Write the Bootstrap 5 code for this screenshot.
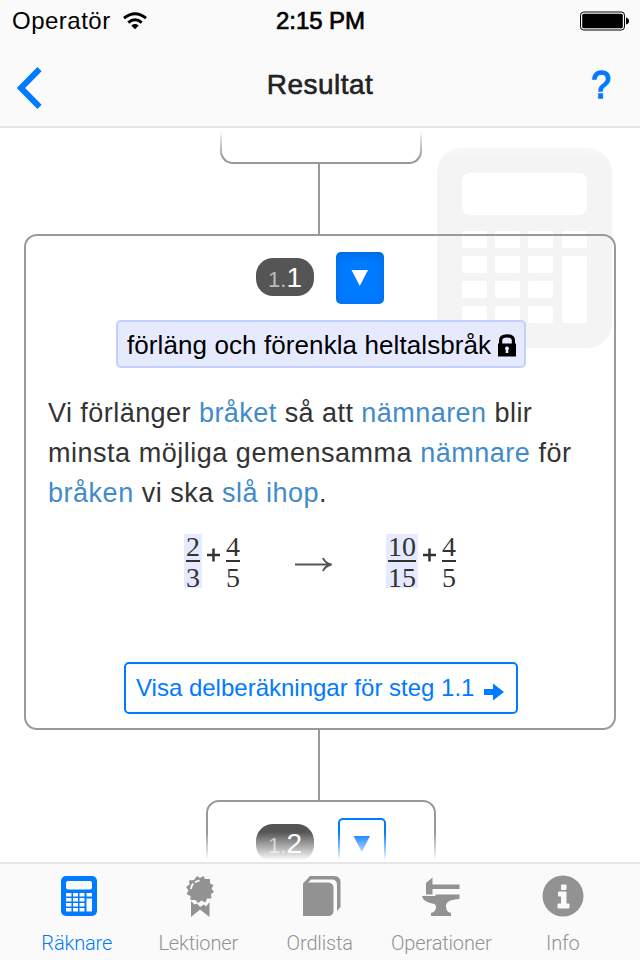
<!DOCTYPE html>
<html lang="sv">
<head>
<meta charset="utf-8">
<meta name="viewport" content="width=device-width, initial-scale=1">
<title>Resultat</title>
<link href="https://cdn.jsdelivr.net/npm/bootstrap@5.3.0/dist/css/bootstrap.min.css" rel="stylesheet">
<style>
  :root { --tint: #007aff; --line: #999; --bar: #fafafa; }
  body { font-family: "Liberation Sans", Arial, sans-serif; width: 640px; height: 960px; color: #333; background: #fff; }
  svg { display: block; }
  .top-bar { height: 128px; background: var(--bar); border-bottom: 2px solid #e5e5e5; }
  .status-row { height: 42px; padding: 0 11px 0 12px; color: #000; font-size: 24px; }
  .status-row > div { flex: 1 1 0; }
  .carrier { letter-spacing: .5px; }
  .wifi { margin-left: 10px; }
  .clock { -webkit-text-stroke: .7px #000; letter-spacing: -.05px; }
  .title-row { height: 84px; padding: 0 29px 0 17px; }
  .title-row > div { flex: 1 1 0; }
  .page-title { font-size: 28px; line-height: 84px; letter-spacing: .45px; color: #222; -webkit-text-stroke: .6px #222; padding: 1px 0 0 12px; }
  .help { font-size: 39px; line-height: 83px; color: var(--tint); -webkit-text-stroke: 1.6px var(--tint); }
  .help span { display: inline-block; transform: scaleX(.9); transform-origin: right; }
  .flow { height: 734px; }
  .watermark { top: 20px; left: 437px; }
  .fade-top, .fade-bottom { left: 0; right: 0; height: 30px; z-index: 3; }
  .fade-top { top: 0; background: linear-gradient(#fff 10%, rgba(255,255,255,0)); }
  .fade-bottom { bottom: 0; background: linear-gradient(rgba(255,255,255,0), #fff 95%); }
  .prev-step { width: 202px; height: 36px; margin-left: 2px; border: 2px solid var(--line); border-top: 0; border-radius: 0 0 13px 13px; }
  .connector { width: 2px; height: 70px; margin-left: -2px; background: var(--line); }
  .step { width: 592px; height: 496px; border: 2px solid var(--line); border-radius: 13px; padding-top: 16px; }
  .next-step { width: 230px; height: 120px; margin-left: 2px; border: 2px solid var(--line); border-radius: 13px; padding-top: 16px; }
  .step-head { gap: 22px; height: 52px; }
  .next-step .step-head { gap: 24px; }
  .step-no { width: 58px; height: 38px; border-radius: 17px; background: #555; color: #fff; font-size: 28px; line-height: 40px; margin-top: -2px; }
  .step-no span { font-size: 22px; color: #bbb; }
  .toggle { width: 48px; height: 52px; border: 2px solid var(--tint); border-radius: 5px; }
  .toggle.pressed { background: var(--tint); box-shadow: inset 0 3px 8px rgba(0,0,0,.14); border: 0; }
  .rule { width: 410px; height: 48px; margin: 16px 0 0 2px; padding: 2px 8px 0 9px; border: 2px solid #c1d0ff; border-radius: 5px; background: #e6eaff; color: #000; font-size: 26px; letter-spacing: .09px; }
  .explain { width: 100%; margin: 25px 0 0; padding-left: 22px; font-size: 27px; line-height: 40px; letter-spacing: .52px; }
  .explain .first { letter-spacing: .45px; }
  .explain a { color: #428bca; text-decoration: none; }
  .math { height: 60px; margin: 21px 0 0 2px; font: 28px/1 "Liberation Serif", serif; width: 274px; }
  .frac { padding: 0 2px; height: 54px; }
  .frac b { font-weight: 400; height: 26px; line-height: 25px; text-align: center; display: block; }
  .frac b + b { border-top: 2px solid #333; height: 28px; line-height: 31px; }
  .frac.hot { background: #e6eaff; }
  .plus { width: 22px; height: 54px; padding-top: 14px; }
  .arrow { margin-top: 23px; }
  .more { width: 394px; height: 52px; margin: 68px 0 0 2px; padding: 0 12px 0 10px; border: 2px solid var(--tint); border-radius: 5px; color: var(--tint); font-size: 24px; }
  .tabs-bar { height: 98px; background: var(--bar); border-top: 2px solid #e5e5e5; padding: 11px 16px 0; }
  .tab-item { width: 121.5px; color: #929292; font: 300 20px/24px Roboto, sans-serif; letter-spacing: -.15px; text-decoration: none; }
  .tab-item svg { height: 42px; }
  .tab-item .ribbon { margin-left: 3px; }
  .tab-item span { margin-top: 14px; }
  .tab-item.on { color: var(--tint); }
</style>
<script src="https://cdn.jsdelivr.net/npm/bootstrap@5.3.0/dist/js/bootstrap.bundle.min.js"></script>
</head>
<body class="m-0 overflow-hidden d-flex flex-column">
<header class="top-bar flex-shrink-0">
  <div class="status-row d-flex align-items-center text-nowrap">
    <div class="d-flex align-items-center carrier">Operatör
      <svg class="wifi" width="28" height="20" viewBox="0 0 28 20"><g fill="none" stroke="#000" stroke-width="3"><path d="M3 7.2Q14 -1.800 25 7.2"/><path d="M7.3 11.6Q14 6 20.7 11.6"/></g><path d="M10.3 14.4Q14 11.7 17.7 14.4L14 18.2Z"/></svg>
    </div>
    <div class="text-center clock">2:15 PM</div>
    <div class="d-flex justify-content-end">
      <svg width="50" height="20" viewBox="0 0 50 20"><rect x="1.5" y="1" width="44" height="18" rx="3.2" fill="none" stroke="#000"/><rect x="3.2" y="2.7" width="40.6" height="14.6" rx="1.5"/><path d="M47 6.5Q50 7.5 50 10T47 13.5Z"/></svg>
    </div>
  </div>
  <div class="title-row d-flex align-items-center">
    <div><svg width="25" height="42" viewBox="0 0 25 42" class="mt-2"><path d="M22.5 2.2L4 21L22.5 39.8" fill="none" stroke="#007aff" stroke-width="6"/></svg></div>
    <div class="text-center page-title">Resultat</div>
    <div class="text-end help"><span>?</span></div>
  </div>
</header>

<main class="flow position-relative overflow-hidden d-flex flex-column align-items-center flex-shrink-0">
  <svg class="watermark position-absolute" width="175" height="200" viewBox="0 0 175 200">
    <rect width="175" height="200" rx="25" fill="#f4f4f4"/>
    <g fill="#fff"><rect x="25" y="25" width="125" height="42" rx="8"/>
    <rect x="25" y="83" width="25" height="17" rx="2"/><rect x="58" y="83" width="25" height="17" rx="2"/><rect x="91" y="83" width="25" height="17" rx="2"/><rect x="125" y="83" width="25" height="17" rx="2"/>
    <rect x="25" y="108" width="25" height="17" rx="2"/><rect x="58" y="108" width="25" height="17" rx="2"/><rect x="91" y="108" width="25" height="17" rx="2"/><rect x="125" y="108" width="25" height="67" rx="2"/>
    <rect x="25" y="133" width="25" height="17" rx="2"/><rect x="58" y="133" width="25" height="17" rx="2"/><rect x="91" y="133" width="25" height="17" rx="2"/>
    <rect x="25" y="158" width="25" height="17" rx="2"/><rect x="58" y="158" width="25" height="17" rx="2"/><rect x="91" y="158" width="25" height="17" rx="2"/></g>
  </svg>
  <div class="prev-step flex-shrink-0"></div>
  <div class="connector flex-shrink-0"></div>
  <section class="step position-relative flex-shrink-0 d-flex flex-column align-items-center">
    <div class="step-head d-flex align-items-center">
      <div class="step-no text-center"><span>1.</span>1</div>
      <div class="toggle pressed d-flex justify-content-center align-items-center"><svg width="18" height="18" viewBox="0 0 18 18"><path d="M.5 1H17L8.8 17Z" fill="#fff"/></svg></div>
    </div>
    <div class="rule d-flex align-items-center justify-content-between text-nowrap">förläng och förenkla heltalsbråk
      <svg width="18" height="23" viewBox="0 0 18 23"><path d="M2.6 10V6.5Q2.6 1.9 9 1.900T15.4 6.5V10" fill="none" stroke="#000" stroke-width="3.2"/><path d="M0 9.5H18V22.5H0Z"/><path d="M9 12.5A2 2 0 0 1 10.3 16V19H7.7V16A2 2 0 0 1 9 12.5Z" fill="#e6eaff"/></svg>
    </div>
    <p class="explain text-nowrap"><span class="first">Vi förlänger <a href="#">bråket</a> så att <a href="#">nämnaren</a> blir</span><br>minsta möjliga gemensamma <a href="#">nämnare</a> för<br><a href="#">bråken</a> vi ska <a href="#">slå ihop</a>.</p>
    <div class="math d-flex justify-content-between align-items-start">
      <div class="d-flex"><div class="frac hot"><b>2</b><b>3</b></div><div class="plus"><svg width="22" height="14" viewBox="0 0 22 14"><path d="M5 7H18M11.5 .5V13.5" stroke="#333" stroke-width="2.5"/></svg></div><div class="frac"><b>4</b><b>5</b></div></div>
      <svg class="arrow" width="38" height="16" viewBox="0 0 38 16"><path d="M0 7.5H36M28 1Q30 6 36.5 7.5Q30 9 28 14" fill="none" stroke="#555" stroke-width="2"/></svg>
      <div class="d-flex"><div class="frac hot"><b>10</b><b>15</b></div><div class="plus"><svg width="22" height="14" viewBox="0 0 22 14"><path d="M5 7H18M11.5 .5V13.5" stroke="#333" stroke-width="2.5"/></svg></div><div class="frac"><b>4</b><b>5</b></div></div>
    </div>
    <div class="more d-flex align-items-center justify-content-between text-nowrap">Visa delberäkningar för steg 1.1
      <svg width="20" height="18" viewBox="0 0 20 18" class="mt-2"><path d="M0 6H9V.5L20 9L9 17.5V12H0Z" fill="#007aff"/></svg>
    </div>
  </section>
  <div class="connector flex-shrink-0"></div>
  <section class="next-step flex-shrink-0">
    <div class="step-head d-flex align-items-center justify-content-center">
      <div class="step-no text-center"><span>1.</span>2</div>
      <div class="toggle d-flex justify-content-center align-items-center"><svg width="18" height="18" viewBox="0 0 18 18"><path d="M.5 1H17L8.8 17Z" fill="#007aff"/></svg></div>
    </div>
  </section>
  <div class="fade-top position-absolute"></div>
  <div class="fade-bottom position-absolute"></div>
</main>

<nav class="tabs-bar d-flex flex-shrink-0">
  <a href="#" class="tab-item on d-flex flex-column align-items-center"><svg width="36" height="42" viewBox="0 0 36 42" class="ms-1"><rect y="1" width="36" height="40" rx="5" fill="currentColor"/><g fill="#fafafa"><rect x="5" y="6" width="26" height="8.5" rx="2"/><path d="M5 18h5.500v3.500H5zM12 18h5v3.500H12zM18.500 18h5v3.500H18.500zM25.500 18h5.500v3.500H25.500zM5 23h5.500v3.500H5zM12 23h5v3.500H12zM18.500 23h5v3.500H18.500zM25.500 23.500h5.500v13H25.500zM5 28h5.500v3.500H5zM12 28h5v3.500H12zM18.500 28h5v3.500H18.500zM5 33h5.500v3.500H5zM12 33h5v3.500H12zM18.500 33h5v3.500H18.500z"/></g></svg><span>Räknare</span></a>
  <a href="#" class="tab-item d-flex flex-column align-items-center"><svg class="ribbon" width="28" height="42" viewBox="0 0 28 42"><path d="M11 1L14 3L17.500 1L19 4L24 4V8.500L27.500 10L25.500 13.500L28 17L25 19L25.500 23.500L21 23.500L19.500 27.500L15.500 25.500L12 28L9.500 25L4.500 25L4.500 21L.5 19L2.500 15.500L0 12L3.500 9.500L3 5.500L8 5ZM5 26L8.500 29.500L11 28.500L14 32L18 29.500L20 31.500L23.500 27V42L14 34.500L5 42Z" fill="currentColor"/><path d="M4.800 14Q5.300 10.500 7.300 8.500M9 7.200L13.500 5.300" fill="none" stroke="#fafafa" stroke-width="1.8"/></svg><span>Lektioner</span></a>
  <a href="#" class="tab-item d-flex flex-column align-items-center"><svg width="38" height="42" viewBox="0 0 38 42" class="ms-1"><path d="M0 8.500L7 1H31Q37.500 1 37.500 7.500V32L34 36V10Q34 4.500 29 4.500H8L5 7.500H24.500Q30.500 7.500 30.500 13V35Q30.500 41 25 41H0Z" fill="currentColor"/></svg><span>Ordlista</span></a>
  <a href="#" class="tab-item d-flex flex-column align-items-center"><svg width="38" height="42" viewBox="0 0 38 42"><path d="M4 8L10.500 2.500V9.500H37.500V14H10.500V19.500H4ZM0 21H13.500V19.500H37.500V24Q24 24.500 24 31Q24 37 29 38V41H9V38Q14 37 14 32Q14 28.500 10 28.500Q1 26.500 0 21Z" fill="currentColor"/></svg><span>Operationer</span></a>
  <a href="#" class="tab-item d-flex flex-column align-items-center"><svg width="42" height="42" viewBox="0 0 42 42"><circle cx="21" cy="21" r="20.5" fill="currentColor"/><path d="M19.500 10H24V14.500H19.500ZM16.500 17H24V29H27V33H16V29H19.500V21H16.500Z" fill="#fafafa" stroke="#fafafa" stroke-linejoin="round"/></svg><span>Info</span></a>
</nav>
</body>
</html>
